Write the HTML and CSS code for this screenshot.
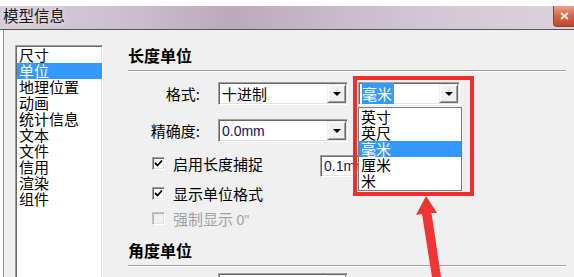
FILE: index.html
```html
<!DOCTYPE html>
<html lang="zh-CN">
<head>
    <meta charset="UTF-8">
    <title>模型信息</title>
    <link rel="stylesheet" href="styles.css">
</head>
<body>
    <div class="window">
        <div class="titlebar">
            <span class="title">模型信息</span>
            <span class="close-btn">
                <svg width="9" height="8" viewBox="0 0 9 8"><path d="M1 1 L8 7 M8 1 L1 7" stroke="#e8e8e8" stroke-width="2"/></svg>
            </span>
        </div>
        <div class="client">
            <ul class="nav-list">
                <li>尺寸</li>
                <li class="selected">单位</li>
                <li>地理位置</li>
                <li>动画</li>
                <li>统计信息</li>
                <li>文本</li>
                <li>文件</li>
                <li>信用</li>
                <li>渲染</li>
                <li>组件</li>
            </ul>

            <div class="panel">
                <div class="section-title">长度单位</div>

                <div class="field-row first">
                    <span class="field-label">格式:</span>
                    <div class="combo">
                        <span class="combo-text">十进制</span>
                        <span class="combo-btn"><i class="tri"></i></span>
                    </div>
                    <div class="combo combo-unit">
                        <span class="combo-text"><span class="sel">毫米</span></span>
                        <span class="combo-btn"><i class="tri"></i></span>
                        <ul class="dropdown">
                            <li>英寸</li>
                            <li>英尺</li>
                            <li class="selected">毫米</li>
                            <li>厘米</li>
                            <li>米</li>
                        </ul>
                        <div class="callout"></div>
                    </div>
                </div>

                <div class="field-row second">
                    <span class="field-label">精确度:</span>
                    <div class="combo">
                        <span class="combo-text latin">0.0mm</span>
                        <span class="combo-btn"><i class="tri"></i></span>
                    </div>
                </div>

                <div class="check-row snap">
                    <span class="checkbox checked">
                        <svg width="11" height="11" viewBox="0 0 11 11"><polyline points="2,5 4.5,7.5 9,2.5" fill="none" stroke="#000" stroke-width="1.8"/></svg>
                    </span>
                    <span class="check-label">启用长度捕捉</span>
                    <div class="textbox latin">0.1mm</div>
                </div>
                <div class="check-row">
                    <span class="checkbox checked">
                        <svg width="11" height="11" viewBox="0 0 11 11"><polyline points="2,5 4.5,7.5 9,2.5" fill="none" stroke="#000" stroke-width="1.8"/></svg>
                    </span>
                    <span class="check-label">显示单位格式</span>
                </div>
                <div class="check-row disabled">
                    <span class="checkbox"></span>
                    <span class="check-label">强制显示 <span class="latin">0"</span></span>
                </div>

                <div class="section-title angle">角度单位</div>

                <div class="field-row last">
                    <span class="field-label"></span>
                    <div class="combo">
                        <span class="combo-text"></span>
                        <span class="combo-btn"><i class="tri"></i></span>
                    </div>
                </div>
            </div>
        </div>
    </div>

    <!-- annotation arrow pointing at the unit list -->
    <svg class="arrow" width="40" height="87" viewBox="0 0 40 87">
        <polygon points="16,6 27,23 21.5,23 31,87 22,87 12,24 6,25" fill="#f23333"/>
    </svg>
</body>
</html>
```

FILE: styles.css
```css
body {
    margin: 0;
    width: 574px;
    height: 277px;
    overflow: hidden;
    position: relative;
    background: #fff;
    font-family: "Noto Sans CJK SC", sans-serif;
    font-size: 15px;
    color: #000;
}
.latin {
    font-family: "Liberation Sans", sans-serif;
    font-size: 14px;
}
.window {
    padding-top: 6px;
}
.titlebar {
    height: 23px;
    display: flex;
    justify-content: space-between;
    align-items: flex-start;
    border-bottom: 1px solid #555;
    background: linear-gradient(to right, #d6cdd9 0%, #cbbfce 22%, #bba9bc 40%, #c5b7c7 55%, #d2c8d5 75%, #dad2dd 100%);
}
.title {
    padding-left: 3px;
    font-size: 15.5px;
    line-height: 18px;
    color: #151515;
    text-shadow: 0 0 5px rgba(255, 255, 255, 0.8);
}
.close-btn {
    width: 20px;
    height: 20px;
    display: flex;
    align-items: center;
    justify-content: center;
    border-left: 1px solid #7a4a3e;
    border-bottom: 1px solid #7a4a3e;
    border-radius: 0 0 0 4px;
    background: linear-gradient(#e8a28e, #d8694c 45%, #c64528);
}
.client {
    display: flex;
    height: 247px;
    overflow: hidden;
    box-sizing: border-box;
    margin-left: 3px;
    padding: 15px 0 0 11px;
    border-left: 1px solid #8e8f8f;
    background: #f0f0f0;
}
.nav-list {
    list-style: none;
    margin: 0;
    padding: 1px 0 0 1px;
    width: 88px;
    height: 232px;
    flex-shrink: 0;
    box-sizing: border-box;
    background: #fff;
    border: 1px solid;
    border-bottom: none;
    border-color: #a0a0a0 #fff #fff #a0a0a0;
    box-shadow: inset 1px 1px #696969, inset -1px 0 #e3e3e3;
}
.nav-list li {
    line-height: 16px;
    padding-left: 2px;
}
.nav-list li.selected,
.dropdown li.selected {
    background: #3399ff;
    color: #fff;
}
.panel {
    flex: 1;
    margin-left: 25px;
    padding-right: 8px;
}
.section-title {
    font-size: 16px;
    font-weight: bold;
    line-height: 20px;
    padding-bottom: 5px;
    border-bottom: 1px solid #a0a0a0;
    box-shadow: 0 1px #fff;
}
.section-title.angle {
    margin-top: 13px;
}
.field-row {
    display: flex;
    align-items: center;
}
.field-row.first {
    margin-top: 11px;
}
.field-row.second {
    margin-top: 14px;
}
.field-row.last {
    margin-top: 7px;
}
.field-label {
    width: 72px;
    margin-right: 18px;
    text-align: right;
}
.combo {
    position: relative;
    width: 130px;
    height: 23px;
    box-sizing: border-box;
    display: flex;
    align-items: center;
    padding-left: 3px;
    background: #fff;
    border: 1px solid;
    border-color: #a0a0a0 #fff #fff #a0a0a0;
    box-shadow: inset 1px 1px #696969, inset -1px -1px #e3e3e3;
}
.combo-text {
    flex: 1;
    line-height: 16px;
    white-space: nowrap;
}
.combo-text.latin {
    color: #14145a;
}
.combo-btn {
    width: 19px;
    height: 19px;
    margin-right: 1px;
    box-sizing: border-box;
    display: flex;
    align-items: center;
    justify-content: center;
    background: #f0f0f0;
    border: 1px solid;
    border-color: #f0f0f0 #696969 #696969 #f0f0f0;
    box-shadow: inset 1px 1px #fff, inset -1px -1px #a0a0a0;
}
.tri {
    width: 0;
    height: 0;
    border-left: 4px solid transparent;
    border-right: 4px solid transparent;
    border-top: 4px solid #000;
}
.combo-unit {
    width: 102px;
    margin-left: 10px;
    z-index: 5;
}
.sel {
    background: #3399ff;
    color: #fff;
    padding-right: 1px;
    border-right: 1px solid #c8843c;
}
.dropdown {
    position: absolute;
    left: -1px;
    top: 24px;
    width: 104px;
    margin: 0;
    padding: 1px 0;
    list-style: none;
    box-sizing: border-box;
    background: #fff;
    border: 1px solid #7a7a7a;
}
.dropdown li {
    line-height: 16px;
    padding-left: 2px;
}
.callout {
    position: absolute;
    left: -6px;
    top: -7px;
    width: 121px;
    height: 120px;
    box-sizing: border-box;
    border: 4px solid #f02d2d;
}
.check-row {
    display: flex;
    align-items: flex-start;
    margin-left: 24px;
    margin-top: 9px;
    height: 16px;
}
.check-row.snap {
    margin-top: 13px;
    height: 22px;
}
.checkbox {
    width: 13px;
    height: 13px;
    margin-top: 1px;
    margin-right: 8px;
    box-sizing: border-box;
    display: flex;
    align-items: center;
    justify-content: center;
    background: #fff;
    border: 1px solid;
    border-color: #a0a0a0 #fff #fff #a0a0a0;
    box-shadow: inset 1px 1px #696969, inset -1px -1px #e3e3e3;
}
.snap .checkbox {
    margin-top: 2px;
}
.check-label {
    line-height: 16px;
}
.snap .check-label {
    width: 147px;
    margin-top: 1px;
}
.disabled .checkbox {
    background: #f0f0f0;
    border-color: #c0c0c0 #fff #fff #c0c0c0;
    box-shadow: inset 1px 1px #b4b4b4, inset -1px -1px #e3e3e3;
}
.disabled .check-label {
    color: #a0a0a0;
}
.textbox {
    width: 80px;
    height: 22px;
    box-sizing: border-box;
    padding-left: 3px;
    line-height: 20px;
    color: #14145a;
    background: #fff;
    border: 1px solid;
    border-color: #a0a0a0 #fff #fff #a0a0a0;
    box-shadow: inset 1px 1px #696969, inset -1px -1px #e3e3e3;
}
.arrow {
    position: absolute;
    left: 410px;
    top: 190px;
}
```
